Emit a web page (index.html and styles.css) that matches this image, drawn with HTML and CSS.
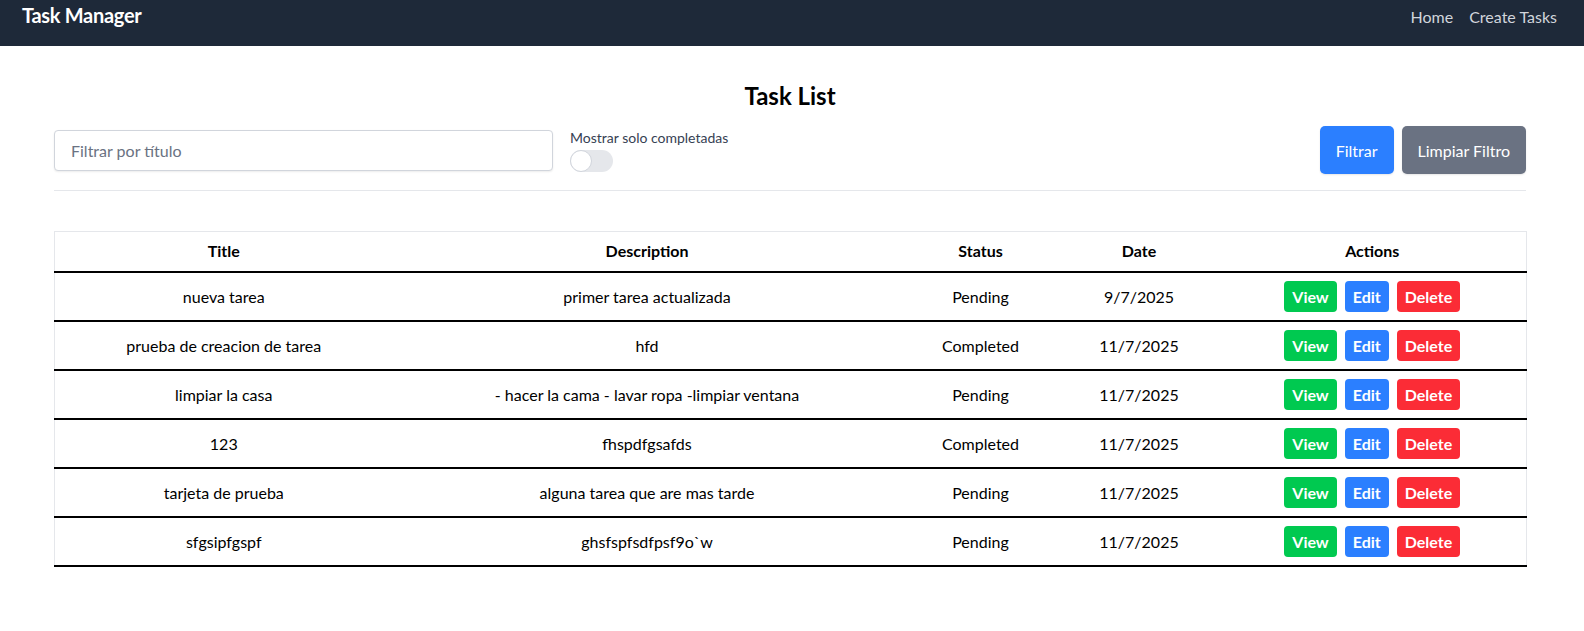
FILE: index.html
```html
<!DOCTYPE html>
<html lang="es">
<head>
<meta charset="utf-8">
<title>Task Manager</title>
<link rel="stylesheet" href="styles.css">
</head>
<body>
<nav class="navbar">
  <span class="brand">Task Manager</span>
  <div class="nav-links">
    <a href="#" class="nav-link">Home</a>
    <a href="#" class="nav-link">Create Tasks</a>
  </div>
</nav>
<main class="page">
  <h2 class="page-title">Task List</h2>
  <div class="filters">
    <input class="search" type="text" placeholder="Filtrar por título">
    <div class="toggle-group">
      <span class="toggle-label">Mostrar solo completadas</span>
      <span class="toggle"><span class="knob"></span></span>
    </div>
    <div class="filter-actions">
      <button class="btn btn-blue">Filtrar</button>
      <button class="btn btn-gray">Limpiar Filtro</button>
    </div>
  </div>
  <table class="tasks">
    <thead>
      <tr>
        <th class="col-title">Title</th>
        <th class="col-desc">Description</th>
        <th class="col-status">Status</th>
        <th class="col-date">Date</th>
        <th class="col-actions">Actions</th>
      </tr>
    </thead>
    <tbody>
      <tr>
        <td>nueva tarea</td><td>primer tarea actualizada</td><td>Pending</td><td>9/7/2025</td>
        <td><div class="row-actions"><button class="sbtn sbtn-green">View</button><button class="sbtn sbtn-blue">Edit</button><button class="sbtn sbtn-red">Delete</button></div></td>
      </tr>
      <tr>
        <td>prueba de creacion de tarea</td><td>hfd</td><td>Completed</td><td>11/7/2025</td>
        <td><div class="row-actions"><button class="sbtn sbtn-green">View</button><button class="sbtn sbtn-blue">Edit</button><button class="sbtn sbtn-red">Delete</button></div></td>
      </tr>
      <tr>
        <td>limpiar la casa</td><td>- hacer la cama - lavar ropa -limpiar ventana</td><td>Pending</td><td>11/7/2025</td>
        <td><div class="row-actions"><button class="sbtn sbtn-green">View</button><button class="sbtn sbtn-blue">Edit</button><button class="sbtn sbtn-red">Delete</button></div></td>
      </tr>
      <tr>
        <td>123</td><td>fhspdfgsafds</td><td>Completed</td><td>11/7/2025</td>
        <td><div class="row-actions"><button class="sbtn sbtn-green">View</button><button class="sbtn sbtn-blue">Edit</button><button class="sbtn sbtn-red">Delete</button></div></td>
      </tr>
      <tr>
        <td>tarjeta de prueba</td><td>alguna tarea que are mas tarde</td><td>Pending</td><td>11/7/2025</td>
        <td><div class="row-actions"><button class="sbtn sbtn-green">View</button><button class="sbtn sbtn-blue">Edit</button><button class="sbtn sbtn-red">Delete</button></div></td>
      </tr>
      <tr>
        <td>sfgsipfgspf</td><td>ghsfspfsdfpsf9o`w</td><td>Pending</td><td>11/7/2025</td>
        <td><div class="row-actions"><button class="sbtn sbtn-green">View</button><button class="sbtn sbtn-blue">Edit</button><button class="sbtn sbtn-red">Delete</button></div></td>
      </tr>
    </tbody>
  </table>
</main>
</body>
</html>
```
FILE: styles.css
```css
* { box-sizing: border-box; }

body {
  margin: 0;
  font-family: "Lato", "Noto Sans", sans-serif;
  font-size: 16px;
  line-height: 24px;
  color: #000;
  background: #fff;
}

.navbar {
  display: flex;
  align-items: baseline;
  justify-content: space-between;
  height: 46px;
  padding: 1px 27px 0 22px;
  background: #1e2939;
}

.brand {
  color: #fff;
  font-size: 20px;
  line-height: 28px;
  font-weight: 700;
  letter-spacing: -0.3px;
}

.nav-links {
  display: flex;
  gap: 16px;
}

.nav-link {
  color: #d1d5dc;
  text-decoration: none;
  font-size: 16px;
  line-height: 24px;
}

.page {
  margin: 0 58px 0 54px;
}

.page-title {
  margin: 34px 0 0;
  text-align: center;
  font-size: 24px;
  line-height: 32px;
  font-weight: 700;
}

.filters {
  display: flex;
  align-items: center;
  margin-top: 14px;
  padding-bottom: 16px;
  border-bottom: 1px solid #e5e7eb;
}

.search {
  width: 499px;
  height: 41px;
  padding: 0 16px;
  border: 1px solid #d1d5dc;
  border-radius: 4px;
  box-shadow: 0 1px 2px rgba(0, 0, 0, 0.08);
  font-family: inherit;
  font-size: 16px;
  color: #000;
  outline: none;
}

.search::placeholder { color: #6a7282; }

.toggle-group {
  display: flex;
  flex-direction: column;
  align-items: flex-start;
  margin-left: 17px;
}

.toggle-label {
  font-size: 14px;
  line-height: 20px;
  color: #364153;
}

.toggle {
  display: flex;
  align-items: center;
  width: 43px;
  height: 22px;
  margin-top: 2px;
  border-radius: 11px;
  background: #e5e7eb;
}

.knob {
  width: 22px;
  height: 22px;
  border-radius: 50%;
  background: #fff;
  border: 1px solid #d1d5dc;
}

.filter-actions {
  display: flex;
  gap: 8px;
  margin-left: auto;
}

.btn {
  height: 48px;
  padding: 0 16px;
  border: none;
  border-radius: 5px;
  color: #fff;
  font-family: inherit;
  font-size: 16px;
  box-shadow: 0 1px 2px rgba(0, 0, 0, 0.1);
}

.btn-blue { background: #2b7fff; }
.btn-gray { background: #6a7282; }

.tasks {
  width: 100%;
  margin-top: 40px;
  border-collapse: collapse;
  table-layout: fixed;
  border: 1px solid #e5e7eb;
}

.tasks th {
  padding: 7px 8px 8px;
  font-weight: 700;
  text-align: center;
  border-bottom: 2px solid #000;
}

.tasks td {
  padding: 8px;
  text-align: center;
  border-bottom: 2px solid #000;
}

.col-title { width: 338px; }
.col-desc { width: 509px; }
.col-status { width: 158px; }
.col-date { width: 159px; }
.col-actions { width: 308px; }

.row-actions {
  display: flex;
  justify-content: center;
  gap: 8px;
}

.sbtn {
  height: 31px;
  padding: 0 8px;
  border: none;
  border-radius: 4px;
  color: #fff;
  font-family: inherit;
  font-size: 16px;
  font-weight: 700;
}

.sbtn-green { background: #00c950; }
.sbtn-blue { background: #2b7fff; }
.sbtn-red { background: #fb2c36; }
```
